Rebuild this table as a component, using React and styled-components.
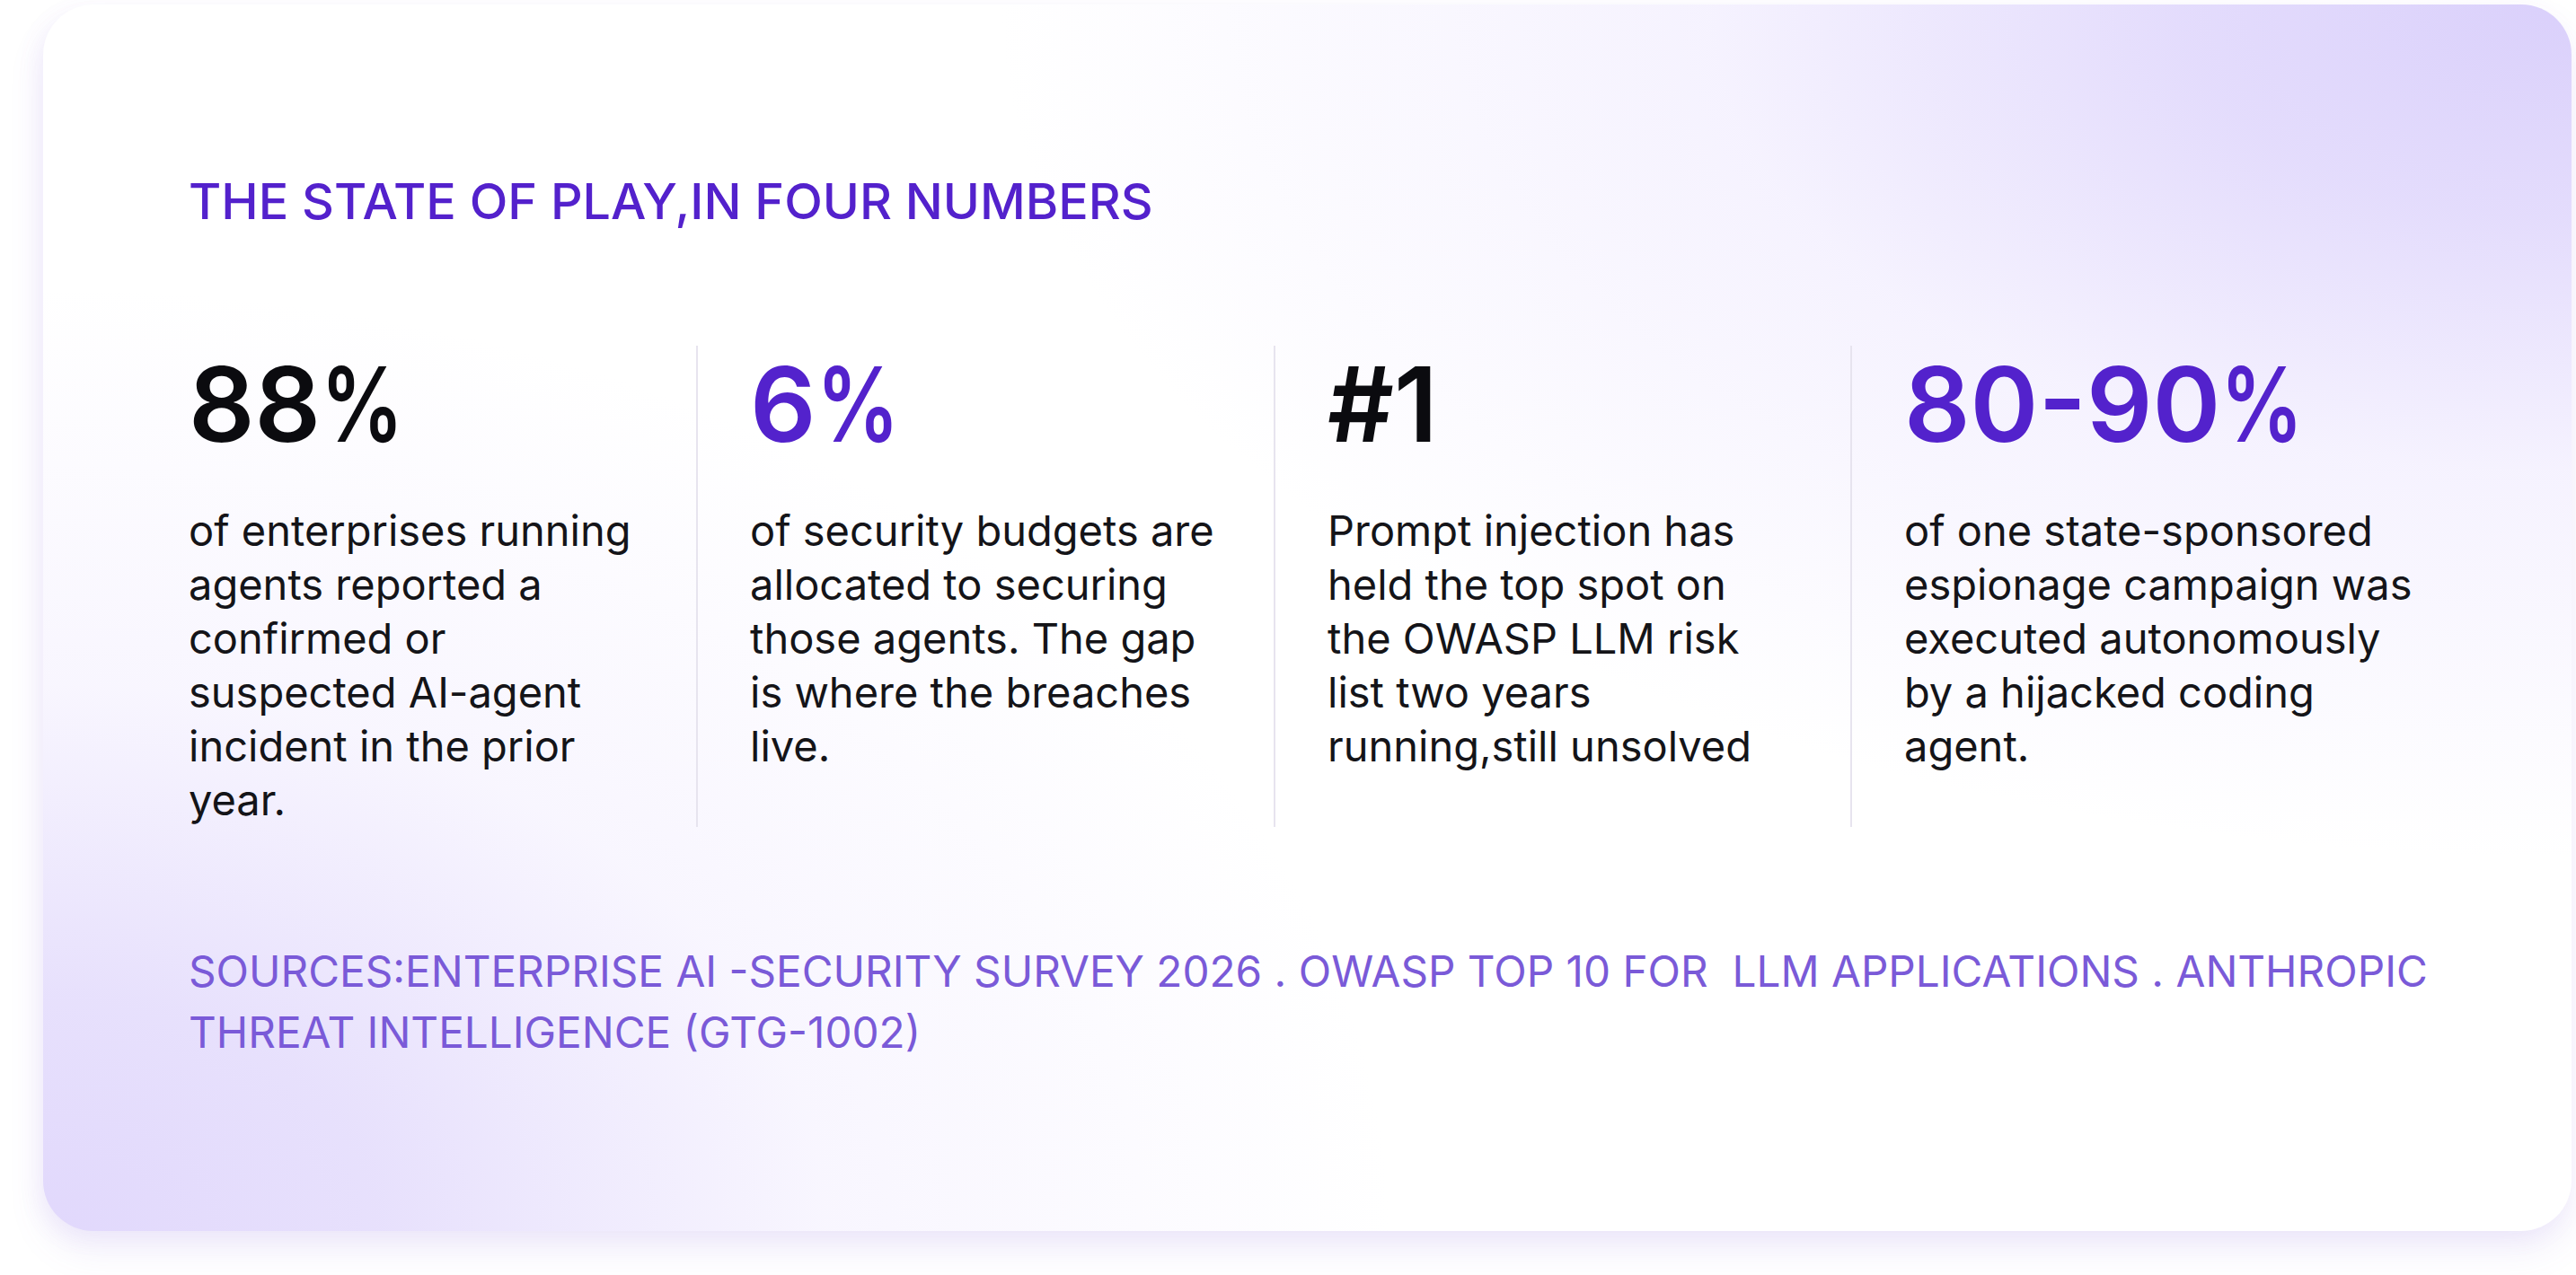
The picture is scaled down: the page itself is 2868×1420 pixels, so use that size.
import React from "react";
import styled, { createGlobalStyle } from "styled-components";

const Global = createGlobalStyle`
  html, body { margin: 0; padding: 0; background: #ffffff; }
  body { font-family: "Inter", "Noto Sans", sans-serif; -webkit-font-smoothing: antialiased; }
  * { box-sizing: border-box; }
`;

const Page = styled.div`
  width: 2868px;
  height: 1420px;
  padding: 5px 5px 0 48px;
  background: #ffffff;
  overflow: hidden;
`;

const Card = styled.section`
  height: 1366px;
  border-radius: 56px;
  padding: 186px 163px 0 162px;
  background:
    radial-gradient(ellipse 1750px 950px at 100% 0%, #dad0fb 0%, rgba(223, 214, 252, 0.85) 25%, rgba(236, 230, 254, 0.5) 55%, rgba(255, 255, 255, 0) 100%),
    radial-gradient(ellipse 1500px 1050px at 0% 100%, #e1d8fc 0%, rgba(227, 219, 252, 0.85) 25%, rgba(240, 235, 254, 0.45) 58%, rgba(255, 255, 255, 0) 100%),
    #ffffff;
  box-shadow: 0 22px 40px rgba(130, 100, 220, 0.10), -6px 8px 24px rgba(150, 120, 230, 0.08);
  display: flex;
  flex-direction: column;
`;

const Title = styled.h2`
  margin: 0;
  font-size: 55.6px;
  line-height: 66px;
  font-weight: 500;
  color: #5321cc;
`;

const Stats = styled.div`
  margin-top: 128px;
  display: grid;
  grid-template-columns: 565px 643px 642px 1fr;
`;

const Stat = styled.div`
  padding: 0 ${(p) => (p.$last ? "0" : "58px")} 0 ${(p) => (p.$first ? "0" : "58px")};
  border-left: ${(p) => (p.$first ? "none" : "2px solid #e7e4ef")};
  min-height: 535px;
  display: flex;
  flex-direction: column;
`;

const Value = styled.div`
  font-size: 115px;
  line-height: 132px;
  font-weight: 600;
  color: ${(p) => (p.$accent ? "#5322cc" : "#0b0b0f")};
  margin-bottom: 44px;
  white-space: nowrap;
`;

const Percent = styled.span`
  display: inline-block;
  transform: scaleX(0.8);
  transform-origin: left center;
  margin-right: -20px;
`;

const Desc = styled.p`
  margin: 0;
  font-size: 47px;
  line-height: 60px;
  font-weight: 400;
  color: #141418;
`;

const Sources = styled.p`
  margin: 127px -60px 0 0;
  font-size: 47.7px;
  line-height: 68px;
  font-weight: 400;
  color: #7a5ad8;
  white-space: pre-wrap;
`;

const stats = [
  {
    value: "88",
    pct: true,
    accent: false,
    text: "of enterprises running agents reported a confirmed or suspected AI-agent incident in the prior year.",
  },
  {
    value: "6",
    pct: true,
    accent: true,
    text: "of security budgets are allocated to securing those agents. The gap is where the breaches live.",
  },
  {
    value: "#1",
    pct: false,
    accent: false,
    text: "Prompt injection has held the top spot on the OWASP LLM risk list two years running,still unsolved",
  },
  {
    value: "80-90",
    pct: true,
    accent: true,
    text: "of one state-sponsored espionage campaign was executed autonomously by a hijacked coding agent.",
  },
];

export default function App() {
  return (
    <>
      <Global />
      <Page>
        <Card>
          <Title>THE STATE OF PLAY,IN FOUR NUMBERS</Title>
          <Stats>
            {stats.map((s, i) => (
              <Stat key={s.value} $first={i === 0} $last={i === stats.length - 1}>
                <Value $accent={s.accent}>
                  {s.value}
                  {s.pct && <Percent>%</Percent>}
                </Value>
                <Desc>{s.text}</Desc>
              </Stat>
            ))}
          </Stats>
          <Sources>
            {"SOURCES:ENTERPRISE AI -SECURITY SURVEY 2026 . OWASP TOP 10 FOR  LLM APPLICATIONS . ANTHROPIC THREAT INTELLIGENCE (GTG-1002)"}
          </Sources>
        </Card>
      </Page>
    </>
  );
}
